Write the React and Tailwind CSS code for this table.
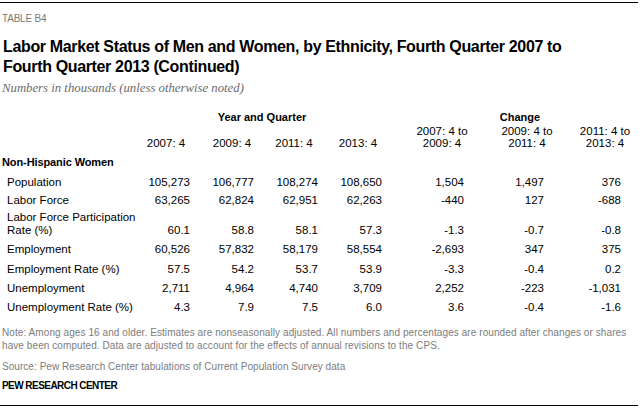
import React from "react";

const cols = "grid grid-cols-[134px_64px_64px_64px_64px_16px_80px_80px_74px]";

const rows = [
  { label: ["Population"], v: ["105,273", "106,777", "108,274", "108,650", "1,504", "1,497", "376"], h: "h-[18px]" },
  { label: ["Labor Force"], v: ["63,265", "62,824", "62,951", "62,263", "-440", "127", "-688"], h: "h-[17px]" },
  { label: ["Labor Force Participation", "Rate (%)"], v: ["60.1", "58.8", "58.1", "57.3", "-1.3", "-0.7", "-0.8"], h: "h-[32px]" },
  { label: ["Employment"], v: ["60,526", "57,832", "58,179", "58,554", "-2,693", "347", "375"], h: "h-[20px]" },
  { label: ["Employment Rate (%)"], v: ["57.5", "54.2", "53.7", "53.9", "-3.3", "-0.4", "0.2"], h: "h-[19px]" },
  { label: ["Unemployment"], v: ["2,711", "4,964", "4,740", "3,709", "2,252", "-223", "-1,031"], h: "h-[19px]" },
  { label: ["Unemployment Rate (%)"], v: ["4.3", "7.9", "7.5", "6.0", "3.6", "-0.4", "-1.6"], h: "h-[13px]" },
];

function DataRow({ r }) {
  const multi = r.label.length > 1;
  return (
    <div className={`${cols} ${r.h} leading-[13px]`}>
      <div className="pl-[7px] whitespace-nowrap">
        {r.label.map((l, i) => (
          <div key={i}>{l}</div>
        ))}
      </div>
      {r.v.slice(0, 4).map((x, i) => (
        <div key={i} className={`text-right pr-[8px] ${multi ? "pt-[13px]" : ""}`}>
          {x}
        </div>
      ))}
      <div />
      {r.v.slice(4).map((x, i) => (
        <div key={i} className={`text-right ${i === 2 ? "pr-[19px]" : "pr-[22px]"} ${multi ? "pt-[13px]" : ""}`}>
          {x}
        </div>
      ))}
    </div>
  );
}

export default function App() {
  return (
    <div className="w-[640px] h-[410px] bg-white text-black font-['Liberation_Sans',Arial,sans-serif] overflow-hidden">
      <div className="pt-[2px]">
        <div className="w-[638px] h-px bg-black" />
      </div>
      <div className="pl-[2px] mt-[10px] text-[10px] leading-[12px] text-[#7a7a7a] tracking-[-0.2px]">TABLE B4</div>
      <div className="pl-[3px] mt-[11.5px] text-[16px] leading-[20px] font-bold tracking-[-0.35px] text-black">
        Labor Market Status of Men and Women, by Ethnicity, Fourth Quarter 2007 to
        <br />
        Fourth Quarter 2013 (Continued)
      </div>
      <div className="pl-[2px] mt-[3.5px] font-['Liberation_Serif',serif] italic text-[12.75px] leading-[16px] text-[#6b6b6b]">
        Numbers in thousands (unless otherwise noted)
      </div>

      <div className="mt-[15px] text-[11.5px]">
        <div className={`${cols} h-[14px] leading-[13px] font-bold text-[11px]`}>
          <div />
          <div className="col-span-4 text-center">Year and Quarter</div>
          <div />
          <div className="col-span-3 text-center pr-[6px]">Change</div>
        </div>
        <div className={`${cols} h-[24px] leading-[12px] items-end`}>
          <div />
          <div className="text-center">2007: 4</div>
          <div className="text-center pl-[4px]">2009: 4</div>
          <div className="text-center">2011: 4</div>
          <div className="text-center">2013: 4</div>
          <div />
          <div className="text-center pr-[8px]">2007: 4 to<br />2009: 4</div>
          <div className="text-center pl-[2px]">2009: 4 to<br />2011: 4</div>
          <div className="text-center pl-[4px]">2011: 4 to<br />2013: 4</div>
        </div>
        <div className="mt-[7px] h-[20px] pl-[2px] font-bold text-[11px] leading-[13px] tracking-[-0.1px]">Non-Hispanic Women</div>
        {rows.map((r, i) => (
          <DataRow key={i} r={r} />
        ))}
      </div>

      <div className="mt-[12px] pl-[2px] text-[10px] leading-[13px] text-[#7c7c7c] tracking-[0.08px] whitespace-nowrap">
        Note: Among ages 16 and older. Estimates are nonseasonally adjusted. All numbers and percentages are rounded after changes or shares
        <br />
        have been computed. Data are adjusted to account for the effects of annual revisions to the CPS.
      </div>
      <div className="mt-[8px] pl-[2px] text-[10px] leading-[13px] text-[#7c7c7c] tracking-[0.05px] whitespace-nowrap">
        Source: Pew Research Center tabulations of Current Population Survey data
      </div>
      <div className="mt-[6px] pl-[2px] text-[10px] leading-[13px] text-black tracking-[-0.55px] font-bold">
        PEW RESEARCH CENTER
      </div>
      <div className="mt-[13px] w-[638px] h-px bg-black" />
    </div>
  );
}
